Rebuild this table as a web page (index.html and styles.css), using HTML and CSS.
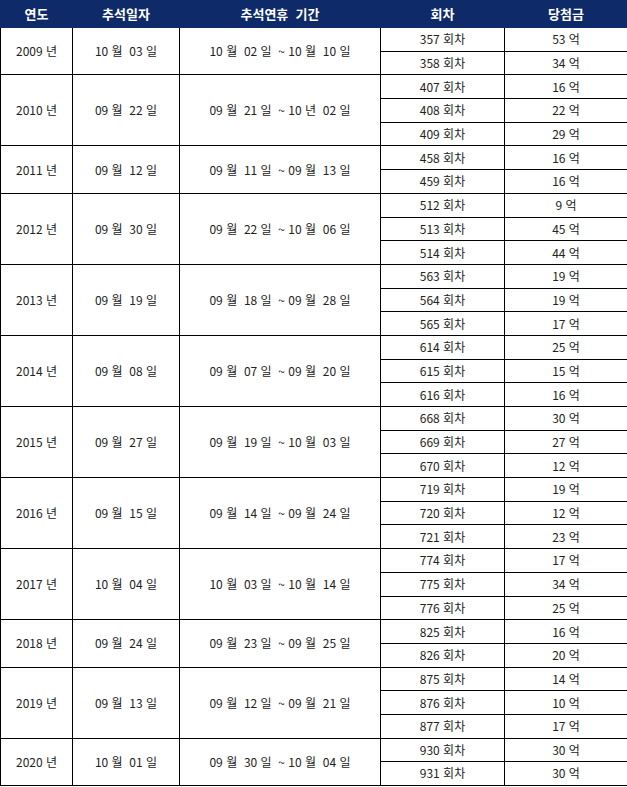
FILE: index.html
```html
<!DOCTYPE html>
<html lang="ko">
<head>
<meta charset="utf-8">
<link rel="stylesheet" href="styles.css">
</head>
<body>
<table class="tbl">
<colgroup>
<col class="c1"><col class="c2"><col class="c3"><col class="c4"><col class="c5">
</colgroup>
<thead>
<tr class="head"><th>연도</th><th>추석일자</th><th>추석연휴&nbsp; 기간</th><th>회차</th><th>당첨금</th></tr>
</thead>
<tbody>
<tr><td rowspan="2">2009 년</td><td rowspan="2">10 월&nbsp; 03 일</td><td rowspan="2">10 월&nbsp; 02 일&nbsp; ~ 10 월&nbsp; 10 일</td><td>357 회차</td><td>53 억</td></tr>
<tr><td>358 회차</td><td>34 억</td></tr>
<tr><td rowspan="3">2010 년</td><td rowspan="3">09 월&nbsp; 22 일</td><td rowspan="3">09 월&nbsp; 21 일&nbsp; ~ 10 년&nbsp; 02 일</td><td>407 회차</td><td>16 억</td></tr>
<tr><td>408 회차</td><td>22 억</td></tr>
<tr><td>409 회차</td><td>29 억</td></tr>
<tr><td rowspan="2">2011 년</td><td rowspan="2">09 월&nbsp; 12 일</td><td rowspan="2">09 월&nbsp; 11 일&nbsp; ~ 09 월&nbsp; 13 일</td><td>458 회차</td><td>16 억</td></tr>
<tr><td>459 회차</td><td>16 억</td></tr>
<tr><td rowspan="3">2012 년</td><td rowspan="3">09 월&nbsp; 30 일</td><td rowspan="3">09 월&nbsp; 22 일&nbsp; ~ 10 월&nbsp; 06 일</td><td>512 회차</td><td>9 억</td></tr>
<tr><td>513 회차</td><td>45 억</td></tr>
<tr><td>514 회차</td><td>44 억</td></tr>
<tr><td rowspan="3">2013 년</td><td rowspan="3">09 월&nbsp; 19 일</td><td rowspan="3">09 월&nbsp; 18 일&nbsp; ~ 09 월&nbsp; 28 일</td><td>563 회차</td><td>19 억</td></tr>
<tr><td>564 회차</td><td>19 억</td></tr>
<tr><td>565 회차</td><td>17 억</td></tr>
<tr><td rowspan="3">2014 년</td><td rowspan="3">09 월&nbsp; 08 일</td><td rowspan="3">09 월&nbsp; 07 일&nbsp; ~ 09 월&nbsp; 20 일</td><td>614 회차</td><td>25 억</td></tr>
<tr><td>615 회차</td><td>15 억</td></tr>
<tr><td>616 회차</td><td>16 억</td></tr>
<tr><td rowspan="3">2015 년</td><td rowspan="3">09 월&nbsp; 27 일</td><td rowspan="3">09 월&nbsp; 19 일&nbsp; ~ 10 월&nbsp; 03 일</td><td>668 회차</td><td>30 억</td></tr>
<tr><td>669 회차</td><td>27 억</td></tr>
<tr><td>670 회차</td><td>12 억</td></tr>
<tr><td rowspan="3">2016 년</td><td rowspan="3">09 월&nbsp; 15 일</td><td rowspan="3">09 월&nbsp; 14 일&nbsp; ~ 09 월&nbsp; 24 일</td><td>719 회차</td><td>19 억</td></tr>
<tr><td>720 회차</td><td>12 억</td></tr>
<tr><td>721 회차</td><td>23 억</td></tr>
<tr><td rowspan="3">2017 년</td><td rowspan="3">10 월&nbsp; 04 일</td><td rowspan="3">10 월&nbsp; 03 일&nbsp; ~ 10 월&nbsp; 14 일</td><td>774 회차</td><td>17 억</td></tr>
<tr><td>775 회차</td><td>34 억</td></tr>
<tr><td>776 회차</td><td>25 억</td></tr>
<tr><td rowspan="2">2018 년</td><td rowspan="2">09 월&nbsp; 24 일</td><td rowspan="2">09 월&nbsp; 23 일&nbsp; ~ 09 월&nbsp; 25 일</td><td>825 회차</td><td>16 억</td></tr>
<tr><td>826 회차</td><td>20 억</td></tr>
<tr><td rowspan="3">2019 년</td><td rowspan="3">09 월&nbsp; 13 일</td><td rowspan="3">09 월&nbsp; 12 일&nbsp; ~ 09 월&nbsp; 21 일</td><td>875 회차</td><td>14 억</td></tr>
<tr><td>876 회차</td><td>10 억</td></tr>
<tr><td>877 회차</td><td>17 억</td></tr>
<tr><td rowspan="2">2020 년</td><td rowspan="2">10 월&nbsp; 01 일</td><td rowspan="2">09 월&nbsp; 30 일&nbsp; ~ 10 월&nbsp; 04 일</td><td>930 회차</td><td>30 억</td></tr>
<tr><td>931 회차</td><td>30 억</td></tr>
</tbody>
</table>
</body>
</html>
```
FILE: styles.css
```css
html, body {
  margin: 0;
  padding: 0;
  background: #ffffff;
}
.tbl {
  border-collapse: collapse;
  table-layout: fixed;
  width: 627px;
  font-family: "Noto Sans CJK KR", "Noto Sans", sans-serif;
  font-size: 12px;
  color: #222222;
}
.c1 { width: 72px; }
.c2 { width: 107px; }
.c3 { width: 201px; }
.c4 { width: 124px; }
.c5 { width: 123px; }
.head th {
  background: #0e2a68;
  color: #ffffff;
  font-weight: 700;
  font-size: 13px;
  height: 26px;
  padding: 0;
  border: 1px solid #0e2a68;
  border-left-color: #3b5290;
  text-align: center;
  vertical-align: middle;
  line-height: 16px;
}
.head th:first-child {
  border-left-color: #0e2a68;
}
.tbl td {
  border: 1px solid #000000;
  height: 22.7px;
  padding: 0;
  text-align: center;
  vertical-align: middle;
  line-height: 16px;
  white-space: nowrap;
}
.tbl tbody tr:last-child td {
  height: 22.2px;
}
```
